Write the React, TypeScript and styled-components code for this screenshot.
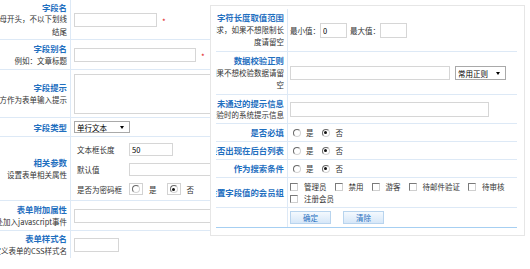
import styled, { createGlobalStyle } from "styled-components";

const GlobalStyle = createGlobalStyle`
  html, body {
    margin: 0;
    padding: 0;
    background: #fff;
    overflow: hidden;
  }
  body {
    font-family: "Noto Sans CJK SC", "Noto Sans", sans-serif;
    font-size: 7.5px;
    color: #333;
  }
`;

const Page = styled.div`
  position: relative;
  width: 530px;
  height: 269px;
  overflow: hidden;
  background: #fff;
`;

const FormTable = styled.div`
  display: flex;
  flex-direction: column;
  width: 320px;
`;

const Row = styled.div<{ $h: number; $end?: "none" | "blue" }>`
  display: flex;
  box-sizing: border-box;
  height: ${(p) => p.$h}px;
  border-bottom: ${(p) =>
    p.$end === "none" ? "0" : p.$end === "blue" ? "1px solid #a6cff2" : "1px solid #dde9f6"};
`;

const LabelCell = styled.div<{ $w: number }>`
  flex: none;
  width: ${(p) => p.$w}px;
  box-sizing: border-box;
  border-right: 1px solid #dde9f6;
  padding-right: 3px;
  display: flex;
  flex-direction: column;
  justify-content: center;
  align-items: flex-end;
  line-height: 12.5px;
  white-space: nowrap;
`;

const Title = styled.div`
  font-size: 8.4px;
  font-weight: bold;
  color: #1f6fbf;
`;

const Note = styled.div`
  font-size: 7.5px;
  color: #333;
`;

const ContentCell = styled.div<{ $pad: number }>`
  flex: 1;
  min-width: 0;
  display: flex;
  align-items: center;
  padding-left: ${(p) => p.$pad}px;
  white-space: nowrap;
`;

const TextInput = styled.input<{ $w: number; $h?: number }>`
  flex: none;
  box-sizing: border-box;
  width: ${(p) => p.$w}px;
  height: ${(p) => p.$h ?? 14}px;
  border: 1px solid #d6d6d6;
  padding: 0 2px;
  margin: 0;
  font: 7.5px "Noto Sans CJK SC", sans-serif;
  color: #000;
  background: #fff;
  outline: none;
`;

const TextArea = styled.textarea`
  flex: none;
  box-sizing: border-box;
  width: 170px;
  height: 40px;
  border: 1px solid #d6d6d6;
  margin: 0;
  padding: 0;
  resize: none;
  outline: none;
`;

const Required = styled.span`
  color: #e02020;
  font-size: 8px;
  margin-left: 5px;
  margin-top: 3px;
`;

const SelectBox = styled.div<{ $w: number; $h: number }>`
  flex: none;
  box-sizing: border-box;
  width: ${(p) => p.$w}px;
  height: ${(p) => p.$h}px;
  border: 1px solid #a9a9a9;
  padding-left: 2px;
  display: flex;
  align-items: center;
  justify-content: space-between;
  color: #000;
  background: #fff;
`;

const Caret = styled.span`
  width: 0;
  height: 0;
  margin-right: 5px;
  border-top: 3px solid #000;
  border-left: 2.5px solid transparent;
  border-right: 2.5px solid transparent;
`;

const SubTable = styled.div`
  align-self: flex-start;
  display: flex;
  flex-direction: column;
  padding-top: 2px;
`;

const SubRow = styled.div`
  display: flex;
  align-items: center;
  height: 20px;
`;

const SubLabel = styled.span`
  box-sizing: border-box;
  width: 55px;
  padding-left: 3px;
  color: #333;
`;

const Choice = styled.label<{ $gap: number }>`
  display: inline-flex;
  align-items: center;
  margin-right: ${(p) => p.$gap}px;
  color: #333;
`;

const RadioBox = styled.span`
  box-sizing: border-box;
  width: 14px;
  height: 12px;
  border: 1px solid #d2d2d2;
  display: inline-flex;
  align-items: center;
  justify-content: center;
  margin-right: 6px;
`;

const RadioDot = styled.span<{ $on: boolean; $gap: number }>`
  position: relative;
  box-sizing: border-box;
  width: 8px;
  height: 8px;
  border-radius: 50%;
  border: 1px solid;
  border-color: #6a6a6a #d4d4d4 #d4d4d4 #6a6a6a;
  background: #fff;
  margin-right: ${(p) => p.$gap}px;
  &::after {
    content: "";
    display: ${(p) => (p.$on ? "block" : "none")};
    position: absolute;
    left: 1.5px;
    top: 1.5px;
    width: 3px;
    height: 3px;
    border-radius: 50%;
    background: #111;
  }
`;

const CheckMark = styled.span`
  box-sizing: border-box;
  width: 8px;
  height: 8px;
  border: 1px solid;
  border-color: #7a7a7a #cfcfcf #cfcfcf #7a7a7a;
  background: #fff;
  margin-right: 6px;
`;

const Panel = styled.div`
  position: absolute;
  left: 210px;
  top: 5px;
  width: 315px;
  box-sizing: border-box;
  padding: 3px 7px 7px 5px;
  border: 1px solid #e6e6e6;
  background: #fff;
`;

const PanelTable = styled.div`
  display: flex;
  flex-direction: column;
  overflow: hidden;
`;

const RangeText = styled.span<{ $left?: number }>`
  margin-left: ${(p) => p.$left ?? 0}px;
`;

const GroupList = styled.div`
  display: flex;
  flex-wrap: wrap;
  row-gap: 4px;
  padding-left: 2px;
  white-space: nowrap;
`;

const GroupItem = styled.label`
  display: inline-flex;
  align-items: center;
  height: 8px;
  margin-right: 8px;
  color: #333;
`;

const ActionButton = styled.button`
  box-sizing: border-box;
  width: 41px;
  height: 13px;
  margin: 0 12px 0 0;
  padding: 0;
  border: 1px solid #b8d4ee;
  background: linear-gradient(#f4f9fe, #d6e7f8);
  color: #1f6fbf;
  font: 7.5px "Noto Sans CJK SC", sans-serif;
  line-height: 11px;
`;

const PasswordChoice = ({ value }: { value: boolean }) => (
  <>
    <Choice $gap={10}>
      <RadioBox>
        <RadioDot $on={value} $gap={0} />
      </RadioBox>
      是
    </Choice>
    <Choice $gap={0}>
      <RadioBox>
        <RadioDot $on={!value} $gap={0} />
      </RadioBox>
      否
    </Choice>
  </>
);

const YesNo = ({ value }: { value: boolean }) => (
  <>
    <Choice $gap={8}>
      <RadioDot $on={value} $gap={5} style={{ marginLeft: 3 }} />是
    </Choice>
    <Choice $gap={0}>
      <RadioDot $on={!value} $gap={6} />否
    </Choice>
  </>
);

const groups = ["管理员", "禁用", "游客", "待邮件验证", "待审核", "注册会员"];

const App = () => {
  return (
    <Page>
      <GlobalStyle />
      <FormTable>
        <Row $h={40}>
          <LabelCell $w={71}>
            <Title>字段名</Title>
            <Note>只能以字母开头，不以下划线</Note>
            <Note>结尾</Note>
          </LabelCell>
          <ContentCell $pad={3}>
            <TextInput $w={83} />
            <Required>*</Required>
          </ContentCell>
        </Row>
        <Row $h={30}>
          <LabelCell $w={71}>
            <Title>字段别名</Title>
            <Note>例如：文章标题</Note>
          </LabelCell>
          <ContentCell $pad={3}>
            <TextInput $w={122} />
            <Required>*</Required>
          </ContentCell>
        </Row>
        <Row $h={48}>
          <LabelCell $w={71}>
            <Title>字段提示</Title>
            <Note>显示在字段别名下方作为表单输入提示</Note>
          </LabelCell>
          <ContentCell $pad={3}>
            <TextArea />
          </ContentCell>
        </Row>
        <Row $h={19}>
          <LabelCell $w={71}>
            <Title>字段类型</Title>
          </LabelCell>
          <ContentCell $pad={3}>
            <SelectBox $w={56} $h={12}>
              单行文本
              <Caret />
            </SelectBox>
          </ContentCell>
        </Row>
        <Row $h={64}>
          <LabelCell $w={71}>
            <Title>相关参数</Title>
            <Note>设置表单相关属性</Note>
          </LabelCell>
          <ContentCell $pad={3}>
            <SubTable>
              <SubRow>
                <SubLabel>文本框长度</SubLabel>
                <TextInput $w={44} $h={13} defaultValue="50" />
              </SubRow>
              <SubRow>
                <SubLabel>默认值</SubLabel>
                <TextInput $w={110} $h={13} />
              </SubRow>
              <SubRow>
                <SubLabel>是否为密码框</SubLabel>
                <PasswordChoice value={false} />
              </SubRow>
            </SubTable>
          </ContentCell>
        </Row>
        <Row $h={30}>
          <LabelCell $w={71}>
            <Title>表单附加属性</Title>
            <Note>可以通过此处加入javascript事件</Note>
          </LabelCell>
          <ContentCell $pad={3}>
            <TextInput $w={170} />
          </ContentCell>
        </Row>
        <Row $h={27} $end="none">
          <LabelCell $w={71}>
            <Title>表单样式名</Title>
            <Note>定义表单的CSS样式名</Note>
          </LabelCell>
          <ContentCell $pad={3}>
            <TextInput $w={45} />
          </ContentCell>
        </Row>
      </FormTable>

      <Panel>
        <PanelTable>
          <Row $h={43}>
            <LabelCell $w={72}>
              <Title>字符长度取值范围</Title>
              <Note>系统将在表单提交时检测数据长度范围是否符合要求，如果不想限制长</Note>
              <Note>度请留空</Note>
            </LabelCell>
            <ContentCell $pad={2}>
              <RangeText>最小值：</RangeText>
              <TextInput $w={27} $h={15} defaultValue="0" />
              <RangeText $left={3}>最大值：</RangeText>
              <TextInput $w={27} $h={15} />
            </ContentCell>
          </Row>
          <Row $h={43}>
            <LabelCell $w={72}>
              <Title>数据校验正则</Title>
              <Note>系统将通过此正则校验表单提交的数据合法性，如果不想校验数据请留</Note>
              <Note>空</Note>
            </LabelCell>
            <ContentCell $pad={2}>
              <TextInput $w={160} />
              <SelectBox $w={51} $h={14} style={{ marginLeft: 5 }}>
                常用正则
                <Caret />
              </SelectBox>
            </ContentCell>
          </Row>
          <Row $h={29}>
            <LabelCell $w={72}>
              <Title>未通过的提示信息</Title>
              <Note>未通过数据校验时的系统提示信息</Note>
            </LabelCell>
            <ContentCell $pad={2}>
              <TextInput $w={199} $h={15} />
            </ContentCell>
          </Row>
          <Row $h={18}>
            <LabelCell $w={72}>
              <Title>是否必填</Title>
            </LabelCell>
            <ContentCell $pad={2}>
              <YesNo value={false} />
            </ContentCell>
          </Row>
          <Row $h={18}>
            <LabelCell $w={72}>
              <Title>是否出现在后台列表</Title>
            </LabelCell>
            <ContentCell $pad={2}>
              <YesNo value={false} />
            </ContentCell>
          </Row>
          <Row $h={18}>
            <LabelCell $w={72}>
              <Title>作为搜索条件</Title>
            </LabelCell>
            <ContentCell $pad={2}>
              <YesNo value={false} />
            </ContentCell>
          </Row>
          <Row $h={30}>
            <LabelCell $w={72}>
              <Title>设置字段值的会员组</Title>
            </LabelCell>
            <ContentCell $pad={0}>
              <GroupList>
                {groups.map((g) => (
                  <GroupItem key={g}>
                    <CheckMark />
                    {g}
                  </GroupItem>
                ))}
              </GroupList>
            </ContentCell>
          </Row>
          <Row $h={20} $end="blue">
            <LabelCell $w={72} />
            <ContentCell $pad={2}>
              <ActionButton type="button">确定</ActionButton>
              <ActionButton type="button">清除</ActionButton>
            </ContentCell>
          </Row>
        </PanelTable>
      </Panel>
    </Page>
  );
};

export default App;
